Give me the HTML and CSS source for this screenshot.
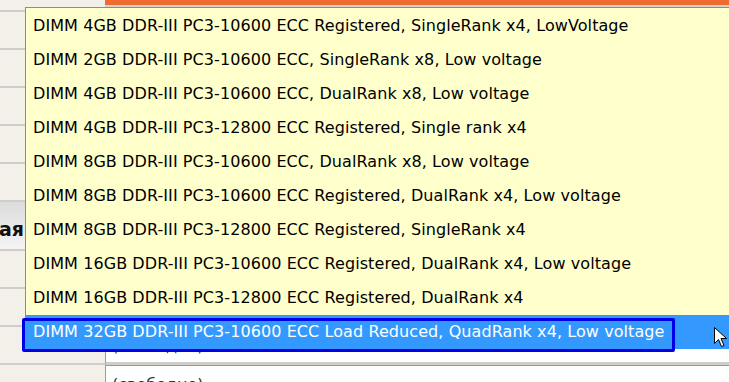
FILE: index.html
```html
<!DOCTYPE html>
<html>
<head>
    <title>Memory slots</title>
    <link rel="stylesheet" href="styles.css">
</head>
<body>
    <div class="page">
        <!-- background table, mostly hidden under the open list -->
        <div class="grid">
            <div class="side">
                <div class="srow r0"></div>
                <div class="srow"></div>
                <div class="srow"></div>
                <div class="srow"></div>
                <div class="srow"></div>
                <div class="srow"></div>
                <div class="srow band"><span class="label">ая</span></div>
                <div class="srow"></div>
                <div class="srow"></div>
                <div class="srow"></div>
                <div class="srow last"></div>
            </div>
            <div class="main">
                <div class="topbar"></div>
                <div class="spacer"></div>
                <div class="cell upper">(свободно)</div>
                <div class="cell lower">(свободно)</div>
            </div>
        </div>

        <!-- open select list -->
        <ul class="options">
            <li>DIMM 4GB DDR-III PC3-10600 ECC Registered, SingleRank x4, LowVoltage</li>
            <li>DIMM 2GB DDR-III PC3-10600 ECC, SingleRank x8, Low voltage</li>
            <li>DIMM 4GB DDR-III PC3-10600 ECC, DualRank x8, Low voltage</li>
            <li>DIMM 4GB DDR-III PC3-12800 ECC Registered, Single rank x4</li>
            <li>DIMM 8GB DDR-III PC3-10600 ECC, DualRank x8, Low voltage</li>
            <li>DIMM 8GB DDR-III PC3-10600 ECC Registered, DualRank x4, Low voltage</li>
            <li>DIMM 8GB DDR-III PC3-12800 ECC Registered, SingleRank x4</li>
            <li>DIMM 16GB DDR-III PC3-10600 ECC Registered, DualRank x4, Low voltage</li>
            <li>DIMM 16GB DDR-III PC3-12800 ECC Registered, DualRank x4</li>
            <li class="selected">DIMM 32GB DDR-III PC3-10600 ECC Load Reduced, QuadRank x4, Low voltage</li>
        </ul>

        <svg class="cursor" width="13" height="21" viewBox="0 0 13 21">
            <path d="M0.5 0.5 L0.5 16.5 L4.5 12.5 L7.5 19.5 L10 18.5 L7 11.5 L12.5 11.5 Z" fill="#fff" stroke="#000" stroke-width="1"/>
        </svg>
    </div>
</body>
</html>
```

FILE: styles.css
```css
body {
    margin: 0;
    background-color: #f2f0e8;
    font-family: "DejaVu Sans", sans-serif;
}

.page {
    position: relative;
    width: 729px;
    height: 382px;
    overflow: hidden;
}

.grid {
    display: grid;
    grid-template-columns: 105px 1fr;
    height: 100%;
}

/* left column rows */
.side {
    display: flex;
    flex-direction: column;
}
.srow {
    height: 36px;
    border-bottom: 2px solid #cfcdc8;
}
.r0 {
    height: 10px;
}
.band {
    height: 47px;
    background: linear-gradient(#dcdcdc, #f4f4f4);
    display: flex;
    align-items: flex-end;
}
.label {
    font-weight: bold;
    font-size: 19px;
    color: #111;
    margin-left: -1px;
    margin-bottom: 9px;
}
.last {
    border-bottom: none;
    height: 20px;
}

/* right column */
.main {
    display: flex;
    flex-direction: column;
}
.topbar {
    height: 5px;
    background-color: #f06b2f;
    border-bottom: 2px solid #d6d3cc;
}
.spacer {
    height: 323px;
}
.cell {
    background-color: #fff;
    border-left: 1px solid #d28a5c;
    padding-left: 6px;
    font-size: 16px;
    line-height: 18px;
    color: #333;
}
.upper {
    height: 25px;
    padding-top: 7px;
    overflow: hidden;
    border-bottom: 3px solid #d0cec9;
}
.lower {
    border-top: 1px solid #d28a5c;
    padding-top: 10px;
    flex: 1;
}

/* drop-down list */
.options {
    position: absolute;
    left: 25px;
    top: 7px;
    width: 720px;
    margin: 0;
    padding: 1px 0 0 0;
    list-style: none;
    background-color: #ffffcc;
    border-left: 1px solid #8c8c8c;
    border-top: 1px solid #8c8c8c;
    font-size: 16px;
    letter-spacing: 0.08px;
    color: #000;
}
.options li {
    height: 34px;
    line-height: 34px;
    padding-left: 7px;
    white-space: nowrap;
}
.options li.selected {
    position: relative;
    background-color: #3399ff;
    color: #fff;
}
.options li.selected::after {
    content: "";
    position: absolute;
    left: -4px;
    top: 3px;
    width: 647px;
    height: 28px;
    border: 3px solid #0000e6;
    border-radius: 2px;
}

.cursor {
    position: absolute;
    left: 714px;
    top: 327px;
}
```
